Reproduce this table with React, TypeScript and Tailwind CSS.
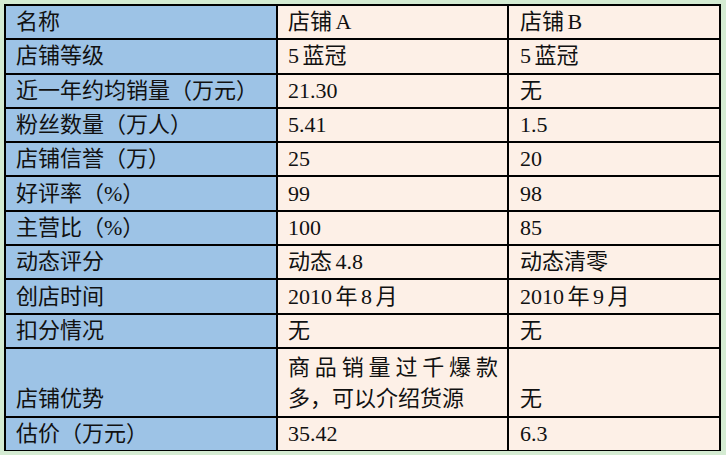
import React from "react";

const rows: [string, string, string][] = [
  ["名称", "店铺 A", "店铺 B"],
  ["店铺等级", "5 蓝冠", "5 蓝冠"],
  ["近一年约均销量（万元）", "21.30", "无"],
  ["粉丝数量（万人）", "5.41", "1.5"],
  ["店铺信誉（万）", "25", "20"],
  ["好评率（%）", "99", "98"],
  ["主营比（%）", "100", "85"],
  ["动态评分", "动态 4.8", "动态清零"],
  ["创店时间", "2010 年 8 月", "2010 年 9 月"],
  ["扣分情况", "无", "无"],
];

const font = {
  fontFamily: '"Liberation Serif", "Noto Sans CJK SC", serif',
};

export default function App() {
  const cellA = "bg-[#9dc3e6] pl-[10px] flex items-center whitespace-nowrap";
  const cellB = "bg-[#fdf0e7] pl-[10px] flex items-center whitespace-nowrap";
  const cellC = "bg-[#fdf0e7] pl-[11px] flex items-center whitespace-nowrap";
  return (
    <div
      className="w-[726px] h-[455px] bg-[#d4ebd2] pt-[4px] pl-[4px] text-[22px] text-[#111] leading-none [word-spacing:-2px]"
      style={font}
    >
      <div className="w-[717px] h-[447px] bg-black p-[2px] grid grid-cols-[270px_229px_210px] grid-rows-[repeat(10,32.3px)_66.6px_32.3px] gap-[2px]">
        {rows.map((r, i) => (
          <React.Fragment key={i}>
            <div className={cellA}>{r[0]}</div>
            <div className={cellB}>{r[1]}</div>
            <div className={cellC}>{r[2]}</div>
          </React.Fragment>
        ))}
        <div className="bg-[#9dc3e6] pl-[10px] flex items-end pb-[2px]">
          <span className="leading-[31px]">店铺优势</span>
        </div>
        <div className="bg-[#fdf0e7] pl-[10px] pr-[9px] flex flex-col justify-end pb-[2px]">
          <div className="flex justify-between leading-[31px]">
            {"商品销量过千爆款".split("").map((c, i) => (
              <span key={i}>{c}</span>
            ))}
          </div>
          <div className="leading-[31px] whitespace-nowrap">多，可以介绍货源</div>
        </div>
        <div className="bg-[#fdf0e7] pl-[11px] flex items-end pb-[2px]">
          <span className="leading-[31px]">无</span>
        </div>
        <div className={cellA}>估价（万元）</div>
        <div className={cellB}>35.42</div>
        <div className={cellC}>6.3</div>
      </div>
    </div>
  );
}
